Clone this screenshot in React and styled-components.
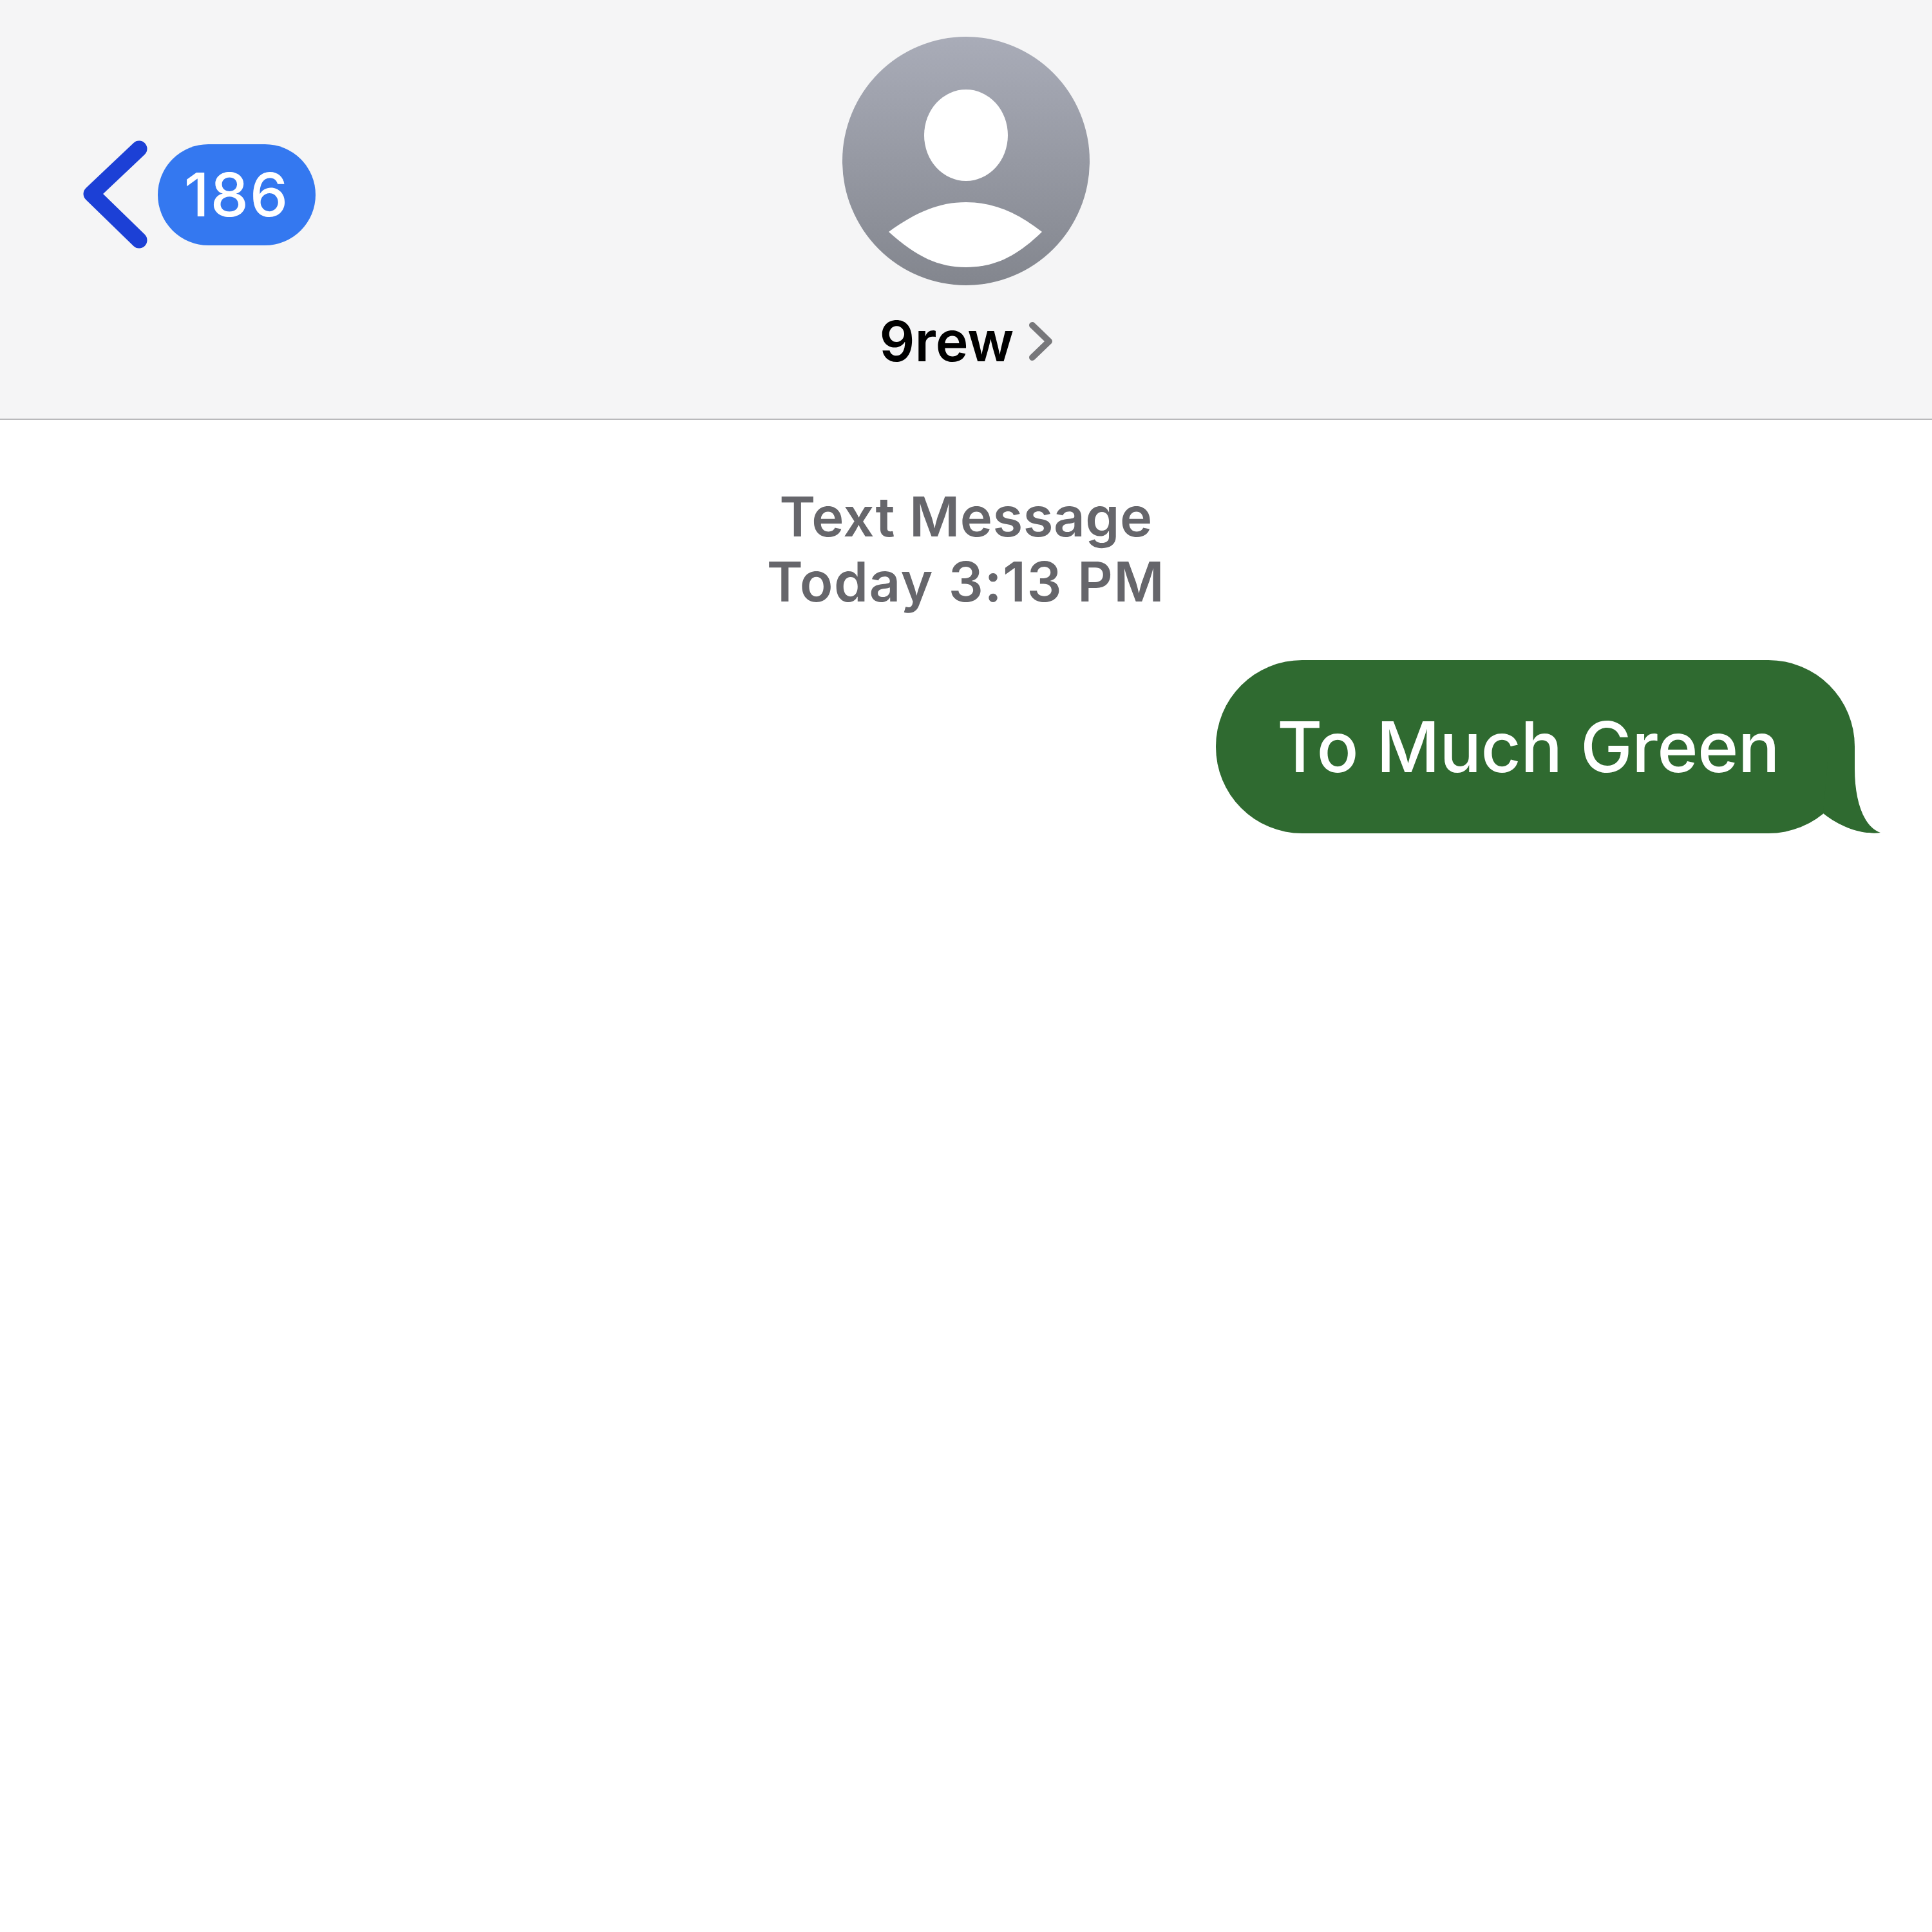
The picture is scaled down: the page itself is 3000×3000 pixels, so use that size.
import React from "react"
import styled, { createGlobalStyle } from "styled-components"

const GlobalStyle = createGlobalStyle`
  html, body {
    margin: 0;
    padding: 0;
    background: #ffffff;
    font-family: Inter, "Liberation Sans", sans-serif;
    font-optical-sizing: none;
  }
`

const Page = styled.div`
  width: 3000px;
  height: 3000px;
  background: #ffffff;
  overflow: hidden;
`

const Header = styled.header`
  box-sizing: border-box;
  height: 652px;
  padding-top: 57px;
  display: grid;
  grid-template-columns: 1fr auto 1fr;
  background: #f5f5f6;
  border-bottom: 2px solid #b9b9bb;
`

const BackLink = styled.div`
  display: flex;
  align-items: center;
  align-self: start;
  gap: 14px;
  margin: 160px 0 0 128px;
`

const Badge = styled.div`
  width: 245px;
  height: 157px;
  border-radius: 79px;
  background: #3478f0;
  color: #ffffff;
  font-size: 94px;
  font-weight: 500;
  letter-spacing: 2px;
  line-height: 157px;
  text-align: center;
`

const Contact = styled.div`
  display: flex;
  flex-direction: column;
  align-items: center;
`

const NameRow = styled.div`
  display: flex;
  align-items: center;
  gap: 22px;
  margin-top: 37px;
  color: #000000;
  font-size: 86px;
  font-weight: 600;
  line-height: 100px;
`

const Thread = styled.main`
  display: flex;
  flex-direction: column;
`

const Stamp = styled.div`
  margin-top: 100px;
  color: #66666b;
  font-size: 85px;
  font-weight: 600;
  letter-spacing: 0.5px;
  line-height: 101px;
  text-align: center;
`

const StampTime = styled.span`
  display: block;
  letter-spacing: 1.5px;
`

const BubbleRow = styled.div`
  display: flex;
  justify-content: flex-end;
  margin: 71px 120px 0 0;
`

const Bubble = styled.div`
  position: relative;
  box-sizing: border-box;
  width: 992px;
  height: 269px;
  padding-left: 95px;
  border-radius: 134px;
  background: #2f6a30;
  color: #ffffff;
  font-size: 108px;
  font-weight: 500;
  letter-spacing: -0.6px;
  line-height: 269px;
`

const Tail = styled.svg`
  position: absolute;
  right: -40px;
  bottom: 0;
  display: block;
`

const Avatar = () => (
  <svg width="384" height="386" viewBox="0 0 384 386">
    <defs>
      <linearGradient id="avatarFill" x1="0" y1="0" x2="0" y2="1">
        <stop offset="0" stopColor="#a9acb8" />
        <stop offset="1" stopColor="#83868e" />
      </linearGradient>
    </defs>
    <ellipse cx="192" cy="193" rx="192" ry="193" fill="url(#avatarFill)" />
    <ellipse cx="192" cy="153" rx="65" ry="71" fill="#ffffff" />
    <path
      d="M72 303 C115 272 150 257 192 257 C234 257 270 272 310 303 C270 342 235 358 192 358 C150 358 115 342 72 303 Z"
      fill="#ffffff"
    />
  </svg>
)

const BackChevron = () => (
  <svg width="103" height="170" viewBox="0 0 103 170">
    <path
      d="M88 14 L14 84 L88 156"
      fill="none"
      stroke="#1c40d6"
      strokeWidth="25"
      strokeLinecap="round"
      strokeLinejoin="round"
    />
  </svg>
)

const NameChevron = () => (
  <svg width="38" height="60" viewBox="0 0 38 60">
    <path
      d="M6 5 L32 30 L6 55"
      fill="none"
      stroke="#77777a"
      strokeWidth="10"
      strokeLinecap="round"
      strokeLinejoin="round"
    />
  </svg>
)

const App = () => {
  return (
    <Page>
      <GlobalStyle />
      <Header>
        <BackLink>
          <BackChevron />
          <Badge>186</Badge>
        </BackLink>
        <Contact>
          <Avatar />
          <NameRow>
            9rew
            <NameChevron />
          </NameRow>
        </Contact>
      </Header>
      <Thread>
        <Stamp>
          Text Message
          <StampTime>Today 3:13 PM</StampTime>
        </Stamp>
        <BubbleRow>
          <Bubble>
            To Much Green
            <Tail width="100" height="134" viewBox="0 0 100 134">
              <path
                d="M60 0 L60 34 C60 84 74 124 100 133 C80 136 45 130 11 103 L20 0 Z"
                fill="#2f6a30"
              />
            </Tail>
          </Bubble>
        </BubbleRow>
      </Thread>
    </Page>
  )
}

export default App
